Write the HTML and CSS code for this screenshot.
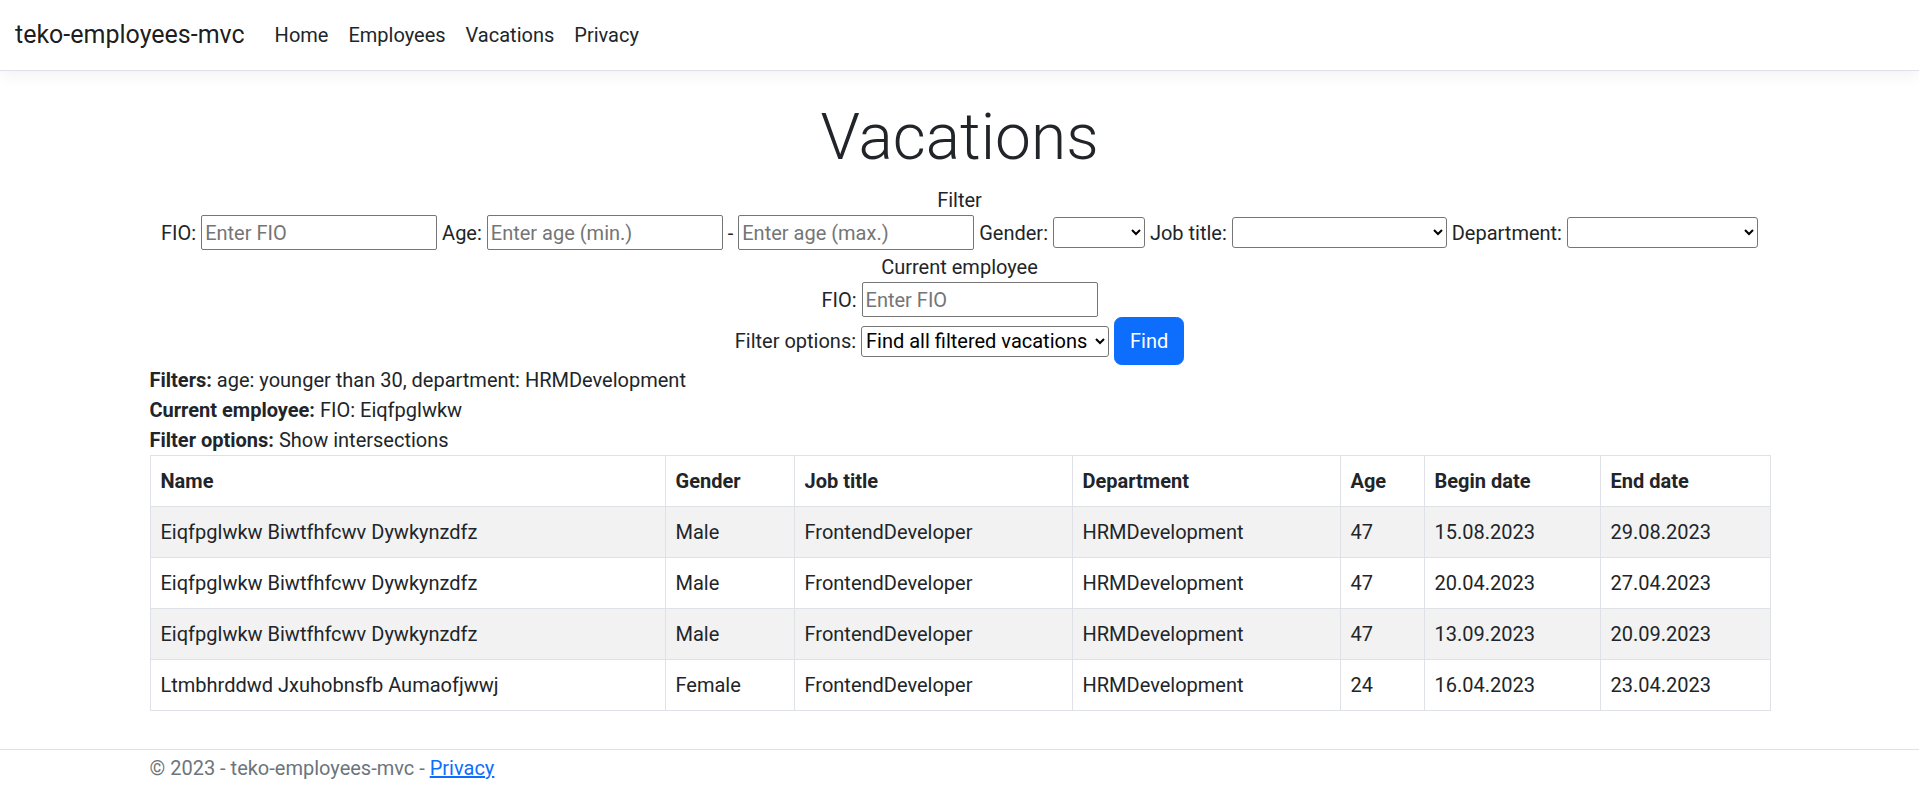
FILE: index.html
```html
<!DOCTYPE html>
<html lang="en">
<head>
<meta charset="utf-8">
<title>Vacations - teko-employees-mvc</title>
<link rel="stylesheet" href="styles.css">
</head>
<body>
<header>
  <nav class="navbar">
    <a class="brand" href="#">teko-employees-mvc</a>
    <ul class="nav">
      <li><a href="#">Home</a></li>
      <li><a href="#">Employees</a></li>
      <li><a href="#">Vacations</a></li>
      <li><a href="#">Privacy</a></li>
    </ul>
  </nav>
</header>
<div class="container">
  <main class="main">
    <h1 class="display">Vacations</h1>
    <form class="search">
      <div class="title">Filter</div>
      <div class="line line-filter">
        FIO: <input class="inp" type="text" placeholder="Enter FIO">
        Age: <input class="inp" type="text" placeholder="Enter age (min.)">
        - <input class="inp" type="text" placeholder="Enter age (max.)">
        Gender: <select class="sel sel-gender"><option></option></select>
        Job title: <select class="sel sel-job"><option></option></select>
        Department: <select class="sel sel-dept"><option></option></select>
      </div>
      <div class="title">Current employee</div>
      <div class="line">
        FIO: <input class="inp" type="text" placeholder="Enter FIO">
      </div>
      <div class="line">
        Filter options: <select class="sel sel-opt"><option>Find all filtered vacations</option></select>
        <button class="btn" type="button">Find</button>
      </div>
    </form>
    <div class="summary"><b>Filters:</b> age: younger than 30, department: HRMDevelopment</div>
    <div class="summary"><b>Current employee:</b> FIO: Eiqfpglwkw</div>
    <div class="summary"><b>Filter options:</b> Show intersections</div>
    <table class="table">
      <thead>
        <tr>
          <th class="c-name">Name</th>
          <th class="c-gender">Gender</th>
          <th class="c-job">Job title</th>
          <th class="c-dept">Department</th>
          <th class="c-age">Age</th>
          <th class="c-begin">Begin date</th>
          <th class="c-end">End date</th>
        </tr>
      </thead>
      <tbody>
        <tr><td>Eiqfpglwkw Biwtfhfcwv Dywkynzdfz</td><td>Male</td><td>FrontendDeveloper</td><td>HRMDevelopment</td><td>47</td><td>15.08.2023</td><td>29.08.2023</td></tr>
        <tr><td>Eiqfpglwkw Biwtfhfcwv Dywkynzdfz</td><td>Male</td><td>FrontendDeveloper</td><td>HRMDevelopment</td><td>47</td><td>20.04.2023</td><td>27.04.2023</td></tr>
        <tr><td>Eiqfpglwkw Biwtfhfcwv Dywkynzdfz</td><td>Male</td><td>FrontendDeveloper</td><td>HRMDevelopment</td><td>47</td><td>13.09.2023</td><td>20.09.2023</td></tr>
        <tr><td>Ltmbhrddwd Jxuhobnsfb Aumaofjwwj</td><td>Female</td><td>FrontendDeveloper</td><td>HRMDevelopment</td><td>24</td><td>16.04.2023</td><td>23.04.2023</td></tr>
      </tbody>
    </table>
  </main>
</div>
<footer class="footer">
  <div class="container">&copy; 2023 - teko-employees-mvc - <a href="#">Privacy</a></div>
</footer>
</body>
</html>
```

FILE: styles.css
```css
* { box-sizing: border-box; }

body {
  margin: 0;
  font-family: "Segoe UI", Roboto, "Liberation Sans", sans-serif;
  font-size: 20px;
  line-height: 1.5;
  color: #212529;
  background: #fff;
}

.navbar {
  display: flex;
  align-items: center;
  padding: 10px 15px;
  border-bottom: 1px solid #dee2e6;
  box-shadow: 0 5px 15px rgba(0, 0, 0, 0.05);
  margin-bottom: 20px;
}

.brand {
  font-size: 25px;
  line-height: 37.5px;
  padding: 6.25px 0;
  margin-right: 20px;
  color: rgba(0, 0, 0, 0.9);
  text-decoration: none;
}

.nav {
  display: flex;
  list-style: none;
  margin: 0;
  padding: 0;
}

.nav a {
  display: block;
  padding: 10px;
  color: #212529;
  text-decoration: none;
}

.container {
  max-width: 1650px;
  margin: 0 auto;
  padding: 0 15px;
}

.main {
  padding-bottom: 18px;
}

.display {
  margin: 0 0 10px;
  padding-top: 9px;
  font-size: 64px;
  font-weight: 300;
  line-height: 75px;
  text-align: center;
}

.search {
  text-align: center;
}

.title {
  line-height: 30px;
}

.line-filter {
  margin-bottom: 2px;
}

.inp {
  width: 236px;
  height: 35px;
  font-family: inherit;
  font-size: 20px;
  color: #212529;
  border: 1px solid #767676;
  border-radius: 2px;
  padding: 1px 3px;
}

.inp::placeholder {
  color: #757575;
}

.sel {
  height: 31px;
  font-family: inherit;
  font-size: 20px;
  color: #000;
  background: #fff;
  border: 1px solid #767676;
  border-radius: 3px;
}

.sel-gender { width: 92px; }
.sel-job { width: 215px; }
.sel-dept { width: 191px; }
.sel-opt { width: 248px; }

.btn {
  font-family: inherit;
  font-size: 20px;
  line-height: 30px;
  padding: 8px 15px;
  color: #fff;
  background: #0d6efd;
  border: 1px solid #0d6efd;
  border-radius: 7.5px;
}

.summary {
  text-align: left;
}

.table {
  width: 100%;
  border-collapse: collapse;
  table-layout: fixed;
  margin-bottom: 20px;
}

.table th,
.table td {
  border: 1px solid #dee2e6;
  padding: 10px;
  text-align: left;
  vertical-align: top;
}

.table tbody tr:nth-child(odd) td {
  background: #f2f2f2;
}

.c-name { width: 515px; }
.c-gender { width: 129px; }
.c-job { width: 278px; }
.c-dept { width: 268px; }
.c-age { width: 84px; }
.c-begin { width: 176px; }
.c-end { width: 170px; }

.footer {
  border-top: 1px solid #dee2e6;
  color: #6c757d;
  padding-top: 3px;
}

.footer a {
  color: #0d6efd;
}
```
